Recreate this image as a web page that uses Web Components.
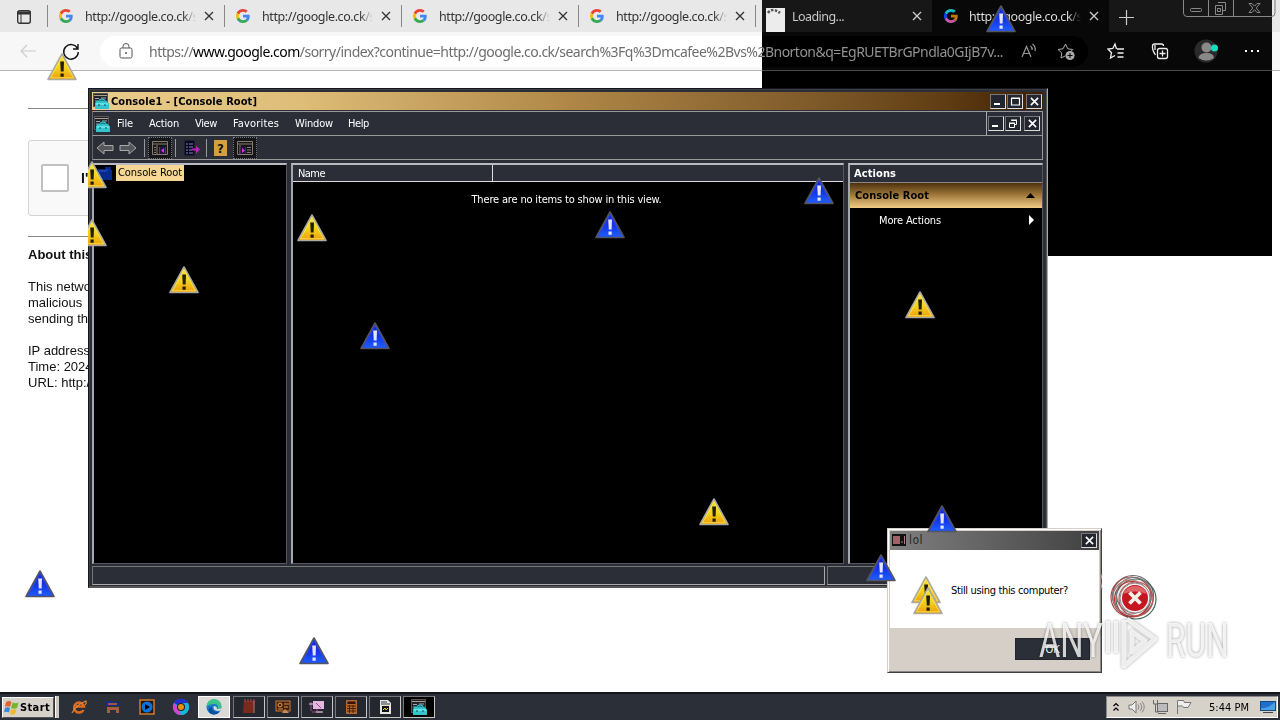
<!DOCTYPE html>
<html lang="en"><head><meta charset="utf-8"><title>Desktop</title>
<style>html,body{margin:0;width:1280px;height:720px;overflow:hidden;background:#fff}</style></head>
<body><desk-top></desk-top>
<script>
const def=(name,css,html,init)=>customElements.define(name,class extends HTMLElement{
  constructor(){super();this.attachShadow({mode:'open'})}
  connectedCallback(){if(this.done)return;this.done=1;
    this.shadowRoot.innerHTML='<style>*{box-sizing:border-box}:host{box-sizing:border-box}'+css+'</style>'+(typeof html==='function'?html(this):html);
    if(init)init(this)}
});
const X=(s=10,w=1.3)=>`<svg width="${s}" height="${s}" viewBox="0 0 10 10"><path d="M1 1L9 9M9 1L1 9" stroke="currentColor" stroke-width="${w}" fill="none"/></svg>`;

/* text spread to a given width by letter spacing */
def('fit-text',':host{display:inline-block;white-space:pre;flex:none}','<slot></slot>',h=>{
  const w=+h.getAttribute('w'),n=h.textContent.length;
  h.style.letterSpacing=((w-h.getBoundingClientRect().width)/n)+'px';h.style.width=w+'px';
});

def('g-logo',':host{display:block;width:14px;height:14px;flex:none}svg{display:block}',
`<svg width="14" height="14" viewBox="0 0 48 48"><path fill="#EA4335" d="M24 9.5c3.54 0 6.71 1.22 9.21 3.6l6.85-6.85C35.9 2.38 30.47 0 24 0 14.62 0 6.51 5.38 2.56 13.22l7.98 6.19C12.43 13.72 17.74 9.5 24 9.5z"/><path fill="#4285F4" d="M46.98 24.55c0-1.57-.15-3.09-.38-4.55H24v9.02h12.94c-.58 2.96-2.26 5.48-4.78 7.18l7.73 6c4.51-4.18 7.09-10.36 7.09-17.65z"/><path fill="#FBBC05" d="M10.53 28.59a14.5 14.5 0 010-9.18l-7.98-6.19a24 24 0 000 21.56l7.98-6.19z"/><path fill="#34A853" d="M24 48c6.48 0 11.93-2.13 15.89-5.81l-7.73-6c-2.15 1.45-4.92 2.3-8.16 2.3-6.26 0-11.57-4.22-13.47-9.91l-7.98 6.19C6.51 42.62 14.62 48 24 48z"/></svg>`);

def('mmc-icon',':host{display:block;width:16px;height:16px;flex:none}svg{display:block}',
`<svg width="16" height="16"><rect x=".5" y=".5" width="14" height="13" fill="#22242a" stroke="#555"/><path d="M1 2.5h13" stroke="#b09a8a"/><path d="M2 5.500h4M2 8h2M8 5h5" stroke="#9ab"/><path d="M2 16V10l2-2.500h2V6.500q3-2 6 0v1h1l3 3V16z" fill="#35c4cc"/><path d="M6.500 8q2.500-2 5 0" stroke="#167" fill="none"/><path d="M3 11h12" stroke="#8ff"/><path d="M6 11v2M12 11v2" stroke="#145"/></svg>`);

def('warn-icon',':host{position:absolute;display:block;width:32px;height:30px;overflow:hidden}svg{display:block}',
h=>{const b=h.hasAttribute('blue'),id=b?'b':'y';return `<svg width="32" height="30" viewBox="0 0 32 30"><defs><linearGradient id="${id}" x1="0" y1="0" x2="0" y2="1"><stop offset="0" stop-color="${b?'#1520d8':'#f2e23a'}"/><stop offset=".55" stop-color="${b?'#1434e8':'#f4d21c'}"/><stop offset="1" stop-color="${b?'#1d62ff':'#ee9c0c'}"/></linearGradient></defs><path d="M16 2L2 27.500H30Z" fill="url(#${id})" stroke="${b?'#55545c':'#aaa9a2'}" stroke-width="1.600" stroke-linejoin="round"/><path d="M16 4.500L4.500 25.800H27.500Z" fill="none" stroke="${b?'#2a4cf0':'#ffe850'}" stroke-width=".8"/><path d="M14.200 9.500h3.800l-.4 10h-2.800zM14.500 21.500h3.200v3.200h-3.200z" fill="${b?'#e4e6ff':'#221d08'}"/></svg>`});

/* ---------- browser ---------- */
def('browser-tab',`:host{display:flex;align-items:center;width:177px;height:32px;flex:none;padding-left:11px;color:#333;position:relative;border-left:1px solid transparent}
:host([sep]){border-image:linear-gradient(#0000 19%,#888 19% 81%,#0000 81%) 1}
:host([on]){background:#f7f7f7;color:#1c1c1c}
.t{width:111px;margin-left:12px;overflow:hidden;-webkit-mask:linear-gradient(90deg,#000 88%,#0000 100%);font-size:12.500px}
.x{position:absolute;right:10px;top:11px;line-height:0;color:#333}`,
h=>`${h.hasAttribute('load')?'<span style="width:13px"></span>':'<g-logo></g-logo>'}<div class="t"><slot></slot></div><span class="x">${X()}</span>`);

def('tool-icon',':host{display:flex;width:24px;height:24px;align-items:center;justify-content:center;flex:none}','<slot></slot>');

def('edge-browser',`:host{display:flex;flex-direction:column;width:1280px;height:692px;background:#fff;font-family:"Noto Sans",sans-serif}
.tabs{height:32px;background:#e8e8e8;display:flex}
.menu{width:47px;padding:8px 0 0 16px}
.plus{padding:8px 0 0 10px}
.bar{height:39px;background:#f7f7f7;border-bottom:1px solid #b4b4b4;display:flex;align-items:center;padding-left:17px}
.pill{width:988px;height:31px;border-radius:16px;background:#fff;margin-left:16px;display:flex;align-items:center;padding-left:14px;color:#6e6e6e;font-size:14px}
.pill b{font-weight:400;color:#000}.pill fit-text{margin-left:11px}
.r{display:flex;margin-left:16px;align-items:center}.r>*+*{margin-left:20px}
.wc{position:absolute;left:1183px;top:0}
.page{padding:37px 0 0 28px;font:13px/16px "Liberation Sans",Arial,sans-serif;color:#111}
hr{border:0;border-top:1px solid #888;margin:0;width:600px}
.cap{margin:31px 0 20px;width:302px;height:76px;border:1px solid #d3d3d3;border-radius:3px;background:#f9f9f9;display:flex;align-items:center;padding-left:12px;font-size:14px}
.cb{width:28px;height:28px;border:2px solid #c1c1c1;border-radius:2px;background:#fff;margin-right:12px}
p{margin:10px 0 16px}`,
`<div class="tabs"><div class="menu"><svg width="16" height="16"><rect x="1.700" y="1.700" width="12.600" height="12.600" rx="2" fill="none" stroke="#333" stroke-width="1.400"/><path d="M1 4h14" stroke="#333" stroke-width="3"/><path d="M5 4v10" stroke="#333"/></svg></div>
<browser-tab sep><fit-text w="113">http://google.co.ck/s</fit-text></browser-tab><browser-tab sep><fit-text w="113">http://google.co.ck/s</fit-text></browser-tab><browser-tab sep><fit-text w="113">http://google.co.ck/s</fit-text></browser-tab><browser-tab sep><fit-text w="113">http://google.co.ck/s</fit-text></browser-tab><browser-tab sep load><fit-text w="52">Loading...</fit-text></browser-tab><browser-tab on><fit-text w="113" style="margin-left:-1px">http://google.co.ck/s</fit-text></browser-tab>
<div class="plus"><svg width="15" height="15"><path d="M7.500 0v15M0 7.500h15" stroke="#333" stroke-width="1.200"/></svg></div></div>
<div class="bar"><tool-icon style="margin-left:-1px"><svg width="18" height="14"><path d="M8 1L2 7l6 6M2 7h15" fill="none" stroke="#ccc" stroke-width="1.200"/></svg></tool-icon>
<tool-icon style="margin-left:19px"><svg width="20" height="20"><path d="M16.500 7.500A7.300 7.300 0 1017.300 11M17 3v5h-5" fill="none" stroke="#111" stroke-width="1.400"/></svg></tool-icon>
<div class="pill" style="margin-left:17px"><tool-icon><svg width="14" height="16"><rect x="1" y="5" width="12" height="10" rx="1.500" fill="none" stroke="#555"/><path d="M4 5V3.500a3 3 0 016 0V5" fill="none" stroke="#555"/><circle cx="7" cy="10" r="1" fill="#555"/></svg></tool-icon><fit-text w="854">https://<b>www.google.com</b>/sorry/index?continue=http://google.co.ck/search%3Fq%3Dmcafee%2Bvs%2Bnorton&amp;q=EgRUETBrGPndla0GIjB7v...</fit-text>
<tool-icon style="margin-left:14px"><svg width="18" height="16"><path d="M2 14L6.500 3.500 11 14M3.500 10.500h6" fill="none" stroke="#666" stroke-width="1.200"/><path d="M10.500 3q2 1.500 1.500 4M12.500 1q3.500 2.500 2.500 7" fill="none" stroke="#666" stroke-width="1.200"/></svg></tool-icon>
<tool-icon style="margin-left:13px"><svg width="19" height="19"><path d="M8 14l-4 2 .8-5L1 7.500l5-.7L8.500 2l2.300 4.800 5 .7-2 2" fill="none" stroke="#555"/><circle cx="13" cy="13.500" r="4.600" fill="#555"/><path d="M13 11v5M10.500 13.500h5" stroke="#fff"/></svg></tool-icon></div>
<div class="r"><tool-icon><svg width="18" height="18"><path d="M9.500 7L8 2 5.800 6.500 1 7l3.500 3.700L3.500 16 8 13.500M10 7h7M10.500 11h6M10.500 15h6" fill="none" stroke="#111" stroke-width="1.300"/></svg></tool-icon>
<tool-icon><svg width="18" height="18"><rect x="6.500" y="6.500" width="10" height="10" rx="2" fill="none" stroke="#111" stroke-width="1.300"/><path d="M11.500 8.500v6M8.500 11.500h6M4.500 13Q1 8 1.500 4q0-2 2-2h7q2 0 2 2M4 3v5" stroke="#111" fill="none" stroke-width="1.300"/></svg></tool-icon>
<tool-icon style="margin-left:22px"><svg width="26" height="24"><circle cx="12" cy="12" r="11.500" fill="#d5d5d5"/><circle cx="12.500" cy="8.500" r="5" fill="#767676"/><path d="M4.500 19q1-5 8-5t7.500 5q-7.500 5-15.500 0" fill="#767676"/><circle cx="20.500" cy="9" r="3.500" fill="#e8253c"/></svg></tool-icon>
<tool-icon style="margin-left:22px"><svg width="16" height="4"><path d="M1 1h2v2H1zM7 1h2v2H7zM13 1h2v2h-2z" fill="#000"/></svg></tool-icon></div></div>
<svg class="wc" width="94" height="18"><path d="M.5 0V13q0 3.500 3.500 3.500H88.500q3.500 0 3.500-3.500V0M25.500 0V16M50.500 0V16" fill="none" stroke="#777"/><rect x="7.500" y="8.500" width="11" height="3" rx="1" fill="none" stroke="#777"/><path d="M35 2.500h7.500v8h-3M32.500 5.500h7v9h-7zM34.500 8.500h3v3h-3z" fill="none" stroke="#777"/><path d="M66 3.500h3l2.500 2.700L74 3.500h3L73.200 8l3.800 4.500h-3L71.500 9.700 69 12.500h-3L69.800 8z" fill="none" stroke="#777"/></svg>
<div class="page"><hr><div class="cap"><div class="cb"></div><b>I'</b></div><hr>
<p><b>About this</b></p><p style="margin-top:16px">This netwo<br>malicious<br>sending th</p><p>IP address<br>Time: 2024<br>URL: http:/</p></div>`);

/* ---------- management console ---------- */
def('win-btn',`:host{display:flex;width:16px;height:15px;flex:none;background:#23262e;border:1px solid;border-color:#777 #ddd #ddd #777;color:#fff;align-items:center;justify-content:center}svg{display:block}`,
h=>({min:'<svg width="10" height="9"><path d="M1 7h6" stroke="#fff" stroke-width="2"/></svg>',
max:'<svg width="11" height="9"><path d="M1.500 1.500h8V8H1.500zM1 1h9" stroke="#fff" fill="none" stroke-width="1.200"/></svg>',
res:'<svg width="10" height="10"><path d="M3.500 1.500h5v4H7M1.500 4.500h5v4h-5zM1 4h6M3 1h6" stroke="#fff" fill="none"/></svg>',
x:X(9,1.8)})[h.getAttribute('k')]);

def('mmc-window',`:host{position:absolute;left:88px;top:88px;width:960px;height:500px;background:#2b2e37;border:1px solid #15161b;border-right:1px solid #aaa;border-bottom-color:#555;box-shadow:inset -1px -1px #555,inset 1px 1px #3c3f48;padding:3px 4px 2px 3px;display:flex;flex-direction:column;font:11px "DejaVu Sans Condensed","DejaVu Sans",sans-serif;font-stretch:condensed;color:#fff}
.title{height:18px;flex:none;display:flex;align-items:center;padding:0 1px 0 1px;background:linear-gradient(90deg,#e9cb8c 0,#ddbd78 22%,#b08747 50%,#7e5a2a 76%,#5f3c12 90%,#3c1f04);color:#000;font-weight:700;gap:1px;margin-bottom:1px}
.title .s,.menu .s{flex:1}
.menu{height:25px;flex:none;display:flex;align-items:center;border:1px solid #999;border-left-color:#666;padding-left:1px;font-size:11px}
.mdi{border-left:1px solid #aaa;height:23px;display:flex;align-items:center;padding:0 2px 0 1px;gap:1px}
.tb{height:24px;flex:none;display:flex;align-items:center;border:1px solid #999;border-top:0;border-left-color:#666;padding-left:3px}
.tb svg{display:block;flex:none}
.sep{width:1px;height:18px;background:#999}
.sq{width:24px;height:22px;border:1px dotted #777;background:#15161a;display:flex;align-items:center;justify-content:center}
.main{flex:1;display:flex;gap:4px;margin-top:3px;min-height:0}
.pane{background:#000;border:1px solid;border-width:2px 1px 1px 2px;border-color:#b9bbc2 #55565c #55565c #a5a7ae}
.tree{width:195px;flex:none;padding-left:4px}
.node{display:flex;align-items:center;height:16px;gap:3px}
.node span{background:#f5d694;color:#000;height:16px;padding:1px 2px}
.list{flex:1;text-align:center}
.head{display:flex;height:17px;background:#2b2e37;border-bottom:1px solid #ddd;text-align:left;align-items:center}
.head div{width:200px;border-right:1px solid #ddd;height:16px;padding:2px 0 0 5px}
.act{width:195px;flex:none}
.ah{height:18px;background:#2b2e37;border-bottom:1px solid #888;padding:2px 0 0 4px;font-weight:700}
.ag{height:25px;background:linear-gradient(#4d300d,#9b7437 45%,#f0cd88);color:#000;font-weight:700;display:flex;align-items:center;justify-content:space-between;padding:0 7px 0 5px}
.am{height:24px;display:flex;align-items:center;justify-content:space-between;padding:0 7px 0 29px}
.st{height:19px;margin-top:2px;flex:none;display:flex;gap:2px}
.st div{border:1px solid;border-color:#777 #aaa #aaa #777}`,
`<div class="title"><mmc-icon></mmc-icon><fit-text w="146" style="margin-left:1px">Console1 - [Console Root]</fit-text><span class="s"></span><win-btn k="min"></win-btn><win-btn k="max"></win-btn><win-btn k="x" style="margin-left:2px"></win-btn></div>
<div class="menu"><mmc-icon></mmc-icon><fit-text w="16" style="margin-left:7px">File</fit-text><fit-text w="30" style="margin-left:16px">Action</fit-text><fit-text w="22" style="margin-left:16px">View</fit-text><fit-text w="46" style="margin-left:16px">Favorites</fit-text><fit-text w="38" style="margin-left:16px">Window</fit-text><fit-text w="21" style="margin-left:15px">Help</fit-text><span class="s"></span><div class="mdi"><win-btn k="min"></win-btn><win-btn k="res"></win-btn><win-btn k="x" style="margin-left:2px"></win-btn></div></div>
<div class="tb"><svg width="18" height="14"><path d="M1 7l7-6v3.500h9v5H8V13z" fill="#55565a" stroke="#aaa"/></svg><svg width="18" height="14" style="margin-left:5px"><path d="M17 7l-7-6v3.500H1v5h9V13z" fill="#55565a" stroke="#aaa"/></svg>
<div class="sep" style="margin:0 3px 0 7px"></div><div class="sq"><svg width="16" height="14"><path d="M.5.5h15v13H.5zM0 3h16M5 4v10M8 6v8M2 6.500h2M2 9h2M2 11.500h2M13 6v8" fill="none" stroke="#8a7a6c"/><rect x="8" y="6" width="5" height="7" fill="#214"/><path d="M12 7v5L9 9.500z" fill="#d3d"/></svg></div>
<div class="sep" style="margin:0 8px 0 3px"></div><svg width="17" height="16"><rect x="1" y="1" width="9" height="14" fill="#05051c" stroke="#112"/><path d="M2 4h2M2 7h2M2 10h2M2 13h2M5 4h4M5 7h4M5 10h3M5 13h4" stroke="#88c"/><path d="M8 8.500h4V5.500l4 4-4 4v-3H8z" fill="#b028b8"/></svg>
<div class="sep" style="margin:0 7px 0 5px"></div><svg width="13" height="16"><rect width="13" height="16" fill="#d2a03c"/><text x="3" y="13" font-family="DejaVu Sans" font-weight="700" font-size="13" fill="#111">?</text></svg>
<div class="sq" style="margin-left:6px"><svg width="16" height="14"><path d="M.5.5h15v13H.5zM0 3h16M3 4v10M8 6v8M10 6.500h4M10 9h4M10 11.500h4" fill="none" stroke="#8a7a6c"/><rect x="3.500" y="6" width="5" height="7" fill="#214"/><path d="M5 7v5l3-2.500z" fill="#d3d"/></svg></div></div>
<div class="main"><div class="pane tree"><div class="node"><svg width="16" height="15" style="margin-left:-1px"><path d="M1 3h7V1h6v3h1v10H1z" fill="#062a8c"/><path d="M2 5h7l2-2" stroke="#35c" fill="none"/></svg><span><fit-text w="64">Console Root</fit-text></span></div></div>
<div class="pane list"><div class="head"><div><fit-text w="27">Name</fit-text></div></div><fit-text w="190" style="margin-top:11px;margin-left:-3px">There are no items to show in this view.</fit-text></div>
<div class="pane act"><div class="ah"><fit-text w="42">Actions</fit-text></div><div class="ag"><fit-text w="74">Console Root</fit-text><svg width="9" height="5"><path d="M0 5h9L4.500 0z"/></svg></div><div class="am"><fit-text w="62">More Actions</fit-text><svg width="6" height="10"><path d="M0 0v10l5-5z" fill="#fff"/></svg></div></div></div>
<div class="st"><div style="width:733px"></div><div style="flex:1"></div></div>`);

/* ---------- message box ---------- */
def('message-box',`:host{position:absolute;left:887px;top:528px;width:215px;height:145px;background:#d6cfc7;border:1px solid #d6cfc7;border-right-color:#404040;border-bottom-color:#404040;box-shadow:inset 1px 1px #fff,inset -1px -1px #888;padding:2px;display:flex;flex-direction:column;font:11px "DejaVu Sans Condensed","DejaVu Sans",sans-serif;font-stretch:condensed;color:#000}
.t{height:19px;flex:none;background:linear-gradient(90deg,#808080,#404040);display:flex;align-items:center;padding:0 2px 1px 2px;gap:3px;color:#26282c}
.b{height:78px;background:#fff;position:relative;padding:34px 0 0 60px}
.f{flex:1;display:flex;justify-content:flex-end;align-items:flex-start;padding:10px 9px 0 0}
.ok{width:75px;height:22px;background:#2b2f38;border:1px solid #22252b;color:#fff;display:flex;align-items:center;justify-content:center}`,
`<div class="t"><svg width="14" height="12"><rect width="14" height="12" fill="#111"/><rect x="1" y="2" width="7" height="8" fill="#a55f67"/><path d="M9 8h2M12.500 2v8" stroke="#b78"/></svg><fit-text w="14" style="font-size:12px">lol</fit-text><span style="flex:1"></span><win-btn k="x"></win-btn></div>
<div class="b"><slot></slot></div><div class="f"><div class="ok"><fit-text w="14">OK</fit-text></div></div>`);

/* ---------- taskbar ---------- */
def('task-item',`:host{display:flex;width:32px;height:22px;flex:none;align-items:center;justify-content:center}:host([fr]){border:1px solid;border-color:#74767c #c5c5c5 #c5c5c5 #74767c;background:#24272e}:host([lt]){background:#dcdad6;border:1px solid #fff}:host([dk]){background:#000}svg{display:block}`,'<slot></slot>');
const S=(b)=>`<svg width="18" height="18" viewBox="0 0 18 18">${b}</svg>`;
def('task-bar',`:host{position:absolute;left:0;top:692px;width:1280px;height:28px;background:#2b2f38;border-top:2px solid #14161a;display:flex;align-items:center;padding:0 2px 0 2px;font:11px "DejaVu Sans Condensed","DejaVu Sans",sans-serif;font-stretch:condensed;color:#000}
.st{width:52px;height:21px;background:#d6d2ca;border:1px solid;border-color:#fff #555 #555 #fff;display:flex;align-items:center;gap:0;font-weight:700;padding-left:1px}
.g{width:4px;height:22px;background:#cdc9c1;margin:0 5px 0 1px;border-left:1px solid #fff}
.q{display:flex;gap:2px}.tray{margin-left:auto;width:172px;height:22px;background:#d6d2ca;border:1px solid;border-color:#888 #fff #fff #888;display:flex;align-items:center;padding-left:6px}
.tray svg{display:block;flex:none}`,
`<div class="st"><svg width="16" height="16"><path d="M2 3q3-2 5.500 0L6 8Q3.500 6.500 1 8z" fill="#e5602a"/><path d="M8.500 3.500q3 1.500 6 0L13 9q-3 1.500-6 0z" fill="#77b52c"/><path d="M1 9q2.500-1.500 5 0L5 13.500q-2.500-1.500-5 0z" fill="#3b84d6"/><path d="M7 10q3 1.500 5.500 0L11 15q-2.500 1.200-5 0z" fill="#efb928"/></svg><fit-text w="30">Start</fit-text></div><div class="g"></div>
<div class="q" style="margin:0 7px 0 -1px">
<task-item>${S('<path d="M13.500 12A5 5 0 1114 8.500H6" fill="none" stroke="#dd6a20" stroke-width="2.500"/><path d="M2 15Q6 7 16 3q1 2-1 4" fill="none" stroke="#e08a40" stroke-width="1.200"/>')}</task-item>
<task-item>${S('<path d="M2 3h6l1 1.500h6V8H2z" fill="#142c90"/><path d="M3 9h12v6h-3v-3H6v3H3z" fill="#a55c40"/><path d="M4 6h9" stroke="#c62" stroke-width="1.500"/>')}</task-item>
<task-item>${S('<rect x="2" y="2" width="14" height="14" fill="#25140a" stroke="#ce7b28" stroke-width="1.500"/><circle cx="9" cy="9" r="5.500" fill="#0a72e0"/><path d="M7 6v6l5-3z" fill="#000"/>')}</task-item>
<task-item>${S('<circle cx="9" cy="9" r="8" fill="#1cb6ca"/><path d="M2 5A8 8 0 0116 5L9 9z" fill="#222ccc"/><path d="M9 17a8 8 0 008-8l-1-4H9z" fill="#18b4e0"/><path d="M9 17A8 8 0 012 5l4 5z" fill="#d045cb"/><circle cx="9" cy="9" r="4" fill="#222"/><circle cx="9" cy="9" r="3" fill="#e8900c"/>')}</task-item>
</div><div class="q">
<task-item lt style="margin-left:-6px">${S('<circle cx="9" cy="9" r="7.500" fill="#1a78c9"/><path d="M1.500 9A7.500 7.500 0 0116.500 8q0 3-4 3Q14 5.500 8.500 6 3 6.500 1.500 9z" fill="#3cc38a"/><path d="M7 9q-1 5 7 5-2 3-6 2.500Q2 15 4 10z" fill="#0b4f9f"/><path d="M9 8q3 0 3 3 3 .5 4.500-1.500V12L14 13Q8 13 8.500 9z" fill="#dcdad6"/>')}</task-item>
<task-item fr style="margin-left:1px">${S('<path d="M4 3h10l-1 12H3z" fill="#7a2a1c"/><path d="M5 1v3M8 1v3M11 1v3M14 1v3" stroke="#a55"/><path d="M14 3v12" stroke="#c77"/>')}</task-item>
<task-item fr>${S('<rect x="2" y="3" width="14" height="10" fill="#442210" stroke="#c87a38"/><circle cx="6" cy="7" r="2" fill="none" stroke="#f0a050"/><path d="M10 6h5M10 9h4M4 11h5" stroke="#e09040"/><path d="M8 15l3-4 4 4z" fill="#c98c5a"/>')}</task-item>
<task-item fr>${S('<rect x="5" y="3" width="11" height="8" fill="#e3b6dd"/><path d="M8 5l5 5M9 11v2M4 14h10M3 4v9" stroke="#a49"/><path d="M1 6h4M8 14h7" stroke="#ddd"/>')}</task-item>
<task-item fr>${S('<rect x="4" y="2" width="11" height="14" fill="#b5662c"/><rect x="5.500" y="3.500" width="8" height="2.500" fill="#311"/><path d="M5 8h9M5 10.500h9M5 13h9M7.500 7v8M11 7v8" stroke="#421"/>')}</task-item>
<task-item fr>${S('<path d="M4 2h8l3 3v11H4z" fill="#e6e6dc"/><path d="M5 4h6M5 6h9" stroke="#335"/><rect x="6" y="8" width="7" height="6" fill="#111"/><path d="M7 12l2-2 1 2 2-2" stroke="#dd3" fill="none"/>')}</task-item>
<task-item fr dk><mmc-icon></mmc-icon></task-item></div>
<div class="tray"><svg width="6" height="10"><path d="M.5 4L3 1.500 5.500 4M.5 8.500L3 6l2.500 2.500" fill="none" stroke="#000" stroke-width="1.200"/></svg>
<svg width="17" height="14" style="margin-left:9px"><path d="M1 5h3l4-4v12L4 9H1z" fill="#eee" stroke="#777"/><path d="M10 4.500q2 2.500 0 5M12 3q3.500 4 0 8M14 1.500q4.500 5.500 0 11" fill="none" stroke="#888"/></svg>
<svg width="17" height="16" style="margin-left:7px"><rect x="5.500" y="4.500" width="10" height="8" fill="#bbb" stroke="#666"/><path d="M6 14.500h8M1.500 1v4h4V1M3.500 5v8h3" fill="none" stroke="#666"/></svg>
<svg width="17" height="16" style="margin-left:6px"><path d="M2.500 15V1.500h6l1 2h6.500l-3 5H8.500l-1-1.500H2.500" fill="#eee" stroke="#777"/></svg>
<fit-text w="40" style="margin-left:17px">5:44 PM</fit-text><svg width="16" height="14" style="margin-left:11px"><rect x=".5" y="1.500" width="15" height="9" fill="#1f70cc" stroke="#124a86"/><path d="M1 8q6 1 14-6v8H1z" fill="#4da0e4"/><path d="M3 12.500h10" stroke="#444"/></svg></div>`);

/* ---------- watermark ---------- */
def('any-run',`:host{position:absolute;left:1039px;top:610px;width:196px;height:62px;display:flex;align-items:center;color:#fffc;filter:drop-shadow(0 0 1.500px #0007)}
.w{width:62px;height:50px;flex:none;font:400 48px/50px Roboto,sans-serif;white-space:nowrap}
.w span{display:inline-block;transform-origin:0 50%}`,
`<div class="w"><span style="transform:scaleX(.68)">ANY</span></div><svg width="58" height="62" style="margin:0 7px 0 4px;flex:none"><path d="M3 11v32M11 11v32" stroke="#fffc" stroke-width="4"/><path d="M19 10v46L50 29 22 9M27 22v20l13-11z" fill="none" stroke="#fffc" stroke-width="5" stroke-linejoin="round"/></svg><div class="w"><span style="transform:scaleX(.66);margin-left:-4px">RUN</span></div>`);

def('desk-top',`:host{display:block;position:relative;width:1280px;height:720px;overflow:hidden;isolation:isolate;background:#fff}
.inv{position:absolute;left:762px;top:0;width:510px;height:256px;background:#fff;mix-blend-mode:difference}
.ld,.err{position:absolute}`,
()=>{const w=(x,y,b)=>`<warn-icon ${b?'blue':''} style="left:${x-16}px;top:${y-15}px${x==92?';clip-path:inset(0 0 0 12px)':''}"></warn-icon>`;
return `<edge-browser></edge-browser><div class="inv"></div>
<svg class="ld" style="left:766px;top:8px" width="19" height="24"><rect width="19" height="24" fill="#ececec"/><path d="M2 5q4-6 12 0" fill="none" stroke="#555" stroke-width="2.500" stroke-dasharray="2.500 1.500"/></svg>
<mmc-window></mmc-window>
<message-box><fit-text w="117" style="margin-left:1px">Still using this computer?</fit-text></message-box>
${[[62,67],[92,175],[92,233],[312,228],[184,280],[920,305],[714,512],[926,590],[928,601]].map(a=>w(...a)).join('')}
${[[610,225],[819,191],[375,336],[942,519],[881,568],[40,584],[314,651],[1001,19]].map(a=>w(...a,1)).join('')}
<svg class="err" style="left:1098px;top:572px" width="62" height="52"><path d="M4 2q-3 7 0 15" fill="none" stroke="#b99"/><circle cx="35" cy="25" r="21" fill="#eee"/><g fill="none" stroke-width="1.200"><circle cx="35" cy="24" r="20.500" stroke="#666"/><circle cx="33" cy="25" r="20" stroke="#a44"/><circle cx="38" cy="27" r="20" stroke="#465"/><circle cx="34" cy="27" r="17.500" stroke="#b33"/><circle cx="36" cy="23" r="17.500" stroke="#777"/><circle cx="38" cy="27" r="17" stroke="#b55"/><circle cx="32" cy="25" r="17" stroke="#a77"/></g><circle cx="37" cy="26" r="15" fill="#f3f3f3" stroke="#888"/><circle cx="37" cy="26" r="13" fill="#c51620"/><path d="M25 22a13 13 0 0124 0q-12-5-24 0" fill="#de6467"/><path d="M31.500 20.500l11 11M42.500 20.500l-11 11" stroke="#f4f1e8" stroke-width="3.800"/></svg>
<task-bar></task-bar><any-run></any-run>`});
</script></body></html>
